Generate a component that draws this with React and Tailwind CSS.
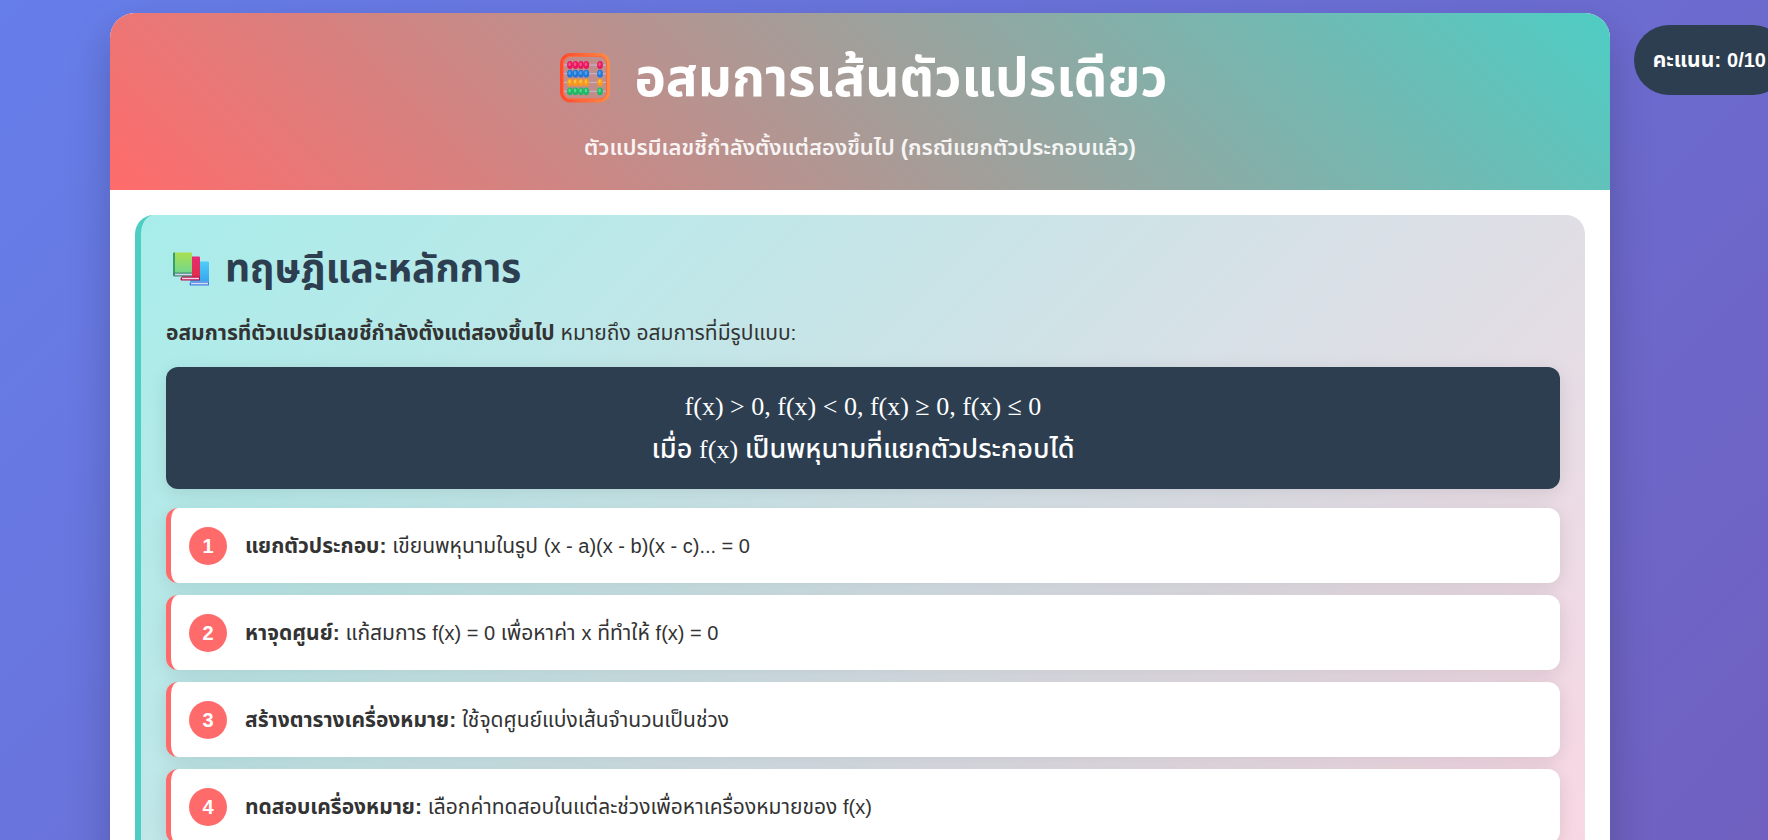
const STEPS = [
  {
    title: "แยกตัวประกอบ:",
    text: (
      <>
        เขียนพหุนามในรูป <Math>(x - a)(x - b)(x - c)... = 0</Math>
      </>
    ),
  },
  {
    title: "หาจุดศูนย์:",
    text: (
      <>
        แก้สมการ <Math>f(x) = 0</Math> เพื่อหาค่า <Math>x</Math> ที่ทำให้ <Math>f(x) = 0</Math>
      </>
    ),
  },
  {
    title: "สร้างตารางเครื่องหมาย:",
    text: "ใช้จุดศูนย์แบ่งเส้นจำนวนเป็นช่วง",
  },
  {
    title: "ทดสอบเครื่องหมาย:",
    text: (
      <>
        เลือกค่าทดสอบในแต่ละช่วงเพื่อหาเครื่องหมายของ <Math>f(x)</Math>
      </>
    ),
  },
];

const BEAD_ROWS = [
  { y: 12, color: "#e8175d", light: "#ff4f8b" },
  { y: 20.7, color: "#1f78d8", light: "#4fa3f2" },
  { y: 29.4, color: "#f79a1c", light: "#ffc04a" },
  { y: 38.3, color: "#1fb866", light: "#52dd8e" },
];

// Latin glyphs run larger than the Thai ones, so formulas sit one size down
function Math({ children }) {
  return <span className="text-[20px]">{children}</span>;
}

function AbacusIcon() {
  return (
    <svg className="size-[50px] shrink-0" viewBox="0 0 50 50" aria-hidden="true">
      <defs>
        <linearGradient id="frame" x1="0" y1="0" x2="1" y2="0">
          <stop offset="0" stopColor="#ff4a2e" />
          <stop offset="1" stopColor="#ff8a45" />
        </linearGradient>
        <linearGradient id="frameInner" x1="0" y1="0" x2="1" y2="0">
          <stop offset="0" stopColor="#ff7048" />
          <stop offset="1" stopColor="#f9653c" />
        </linearGradient>
      </defs>
      <rect x="2" y="2" width="46" height="45.5" rx="8" fill="none" stroke="url(#frame)" strokeWidth="4" />
      <rect x="3.4" y="3.4" width="43.2" height="42.7" rx="7" fill="none" stroke="url(#frameInner)" strokeWidth="1" />
      {BEAD_ROWS.map((row) => (
        <g key={row.y}>
          <path d={`M4 ${row.y}H46`} stroke="#c9b7dc" strokeWidth="1" />
          {[10, 15.5, 21, 26.3, 40].map((x) => (
            <g key={x}>
              <ellipse cx={x} cy={row.y} rx="2.9" ry="3.9" fill={row.color} />
              <ellipse cx={x - 0.4} cy={row.y - 0.8} rx="1.2" ry="2" fill={row.light} />
            </g>
          ))}
        </g>
      ))}
    </svg>
  );
}

function BooksIcon() {
  return (
    <svg className="h-[34px] w-9 shrink-0" viewBox="0 0 36 34" aria-hidden="true">
      <defs>
        <linearGradient id="bookGreen" x1="0" y1="0" x2="0" y2="1">
          <stop offset="0" stopColor="#a9e04f" />
          <stop offset="1" stopColor="#72d68d" />
        </linearGradient>
        <linearGradient id="bookBlue" x1="0" y1="0" x2="0" y2="1">
          <stop offset="0" stopColor="#4fcdf8" />
          <stop offset="1" stopColor="#38a5ee" />
        </linearGradient>
        <linearGradient id="bookRed" x1="0" y1="0" x2="0" y2="1">
          <stop offset="0" stopColor="#e62a73" />
          <stop offset="1" stopColor="#e0304a" />
        </linearGradient>
      </defs>
      <path d="M17 9.500h18a1 1 0 0 1 1 1v19H17z" fill="url(#bookBlue)" />
      <path d="M18 29.500h18v4H18a1.500 1.500 0 0 1-1.500-2z" fill="#3f7fe0" />
      <path d="M18 30.700h17v1.600H18z" fill="#d9dcf8" />
      <path d="M9 4.500h17a1 1 0 0 1 1 1V25H9z" fill="url(#bookRed)" />
      <path d="M9 24.500h18v4H9a1.500 1.500 0 0 1-1.500-2z" fill="#b8124f" />
      <path d="M9 25.700h17v1.600H9z" fill="#f3d3e6" />
      <path d="M1 .5h17a1 1 0 0 1 1 1V21H1z" fill="url(#bookGreen)" />
      <path d="M0 1.500a1 1 0 0 1 1-1h1V22H0z" fill="#35a06a" />
      <path d="M0 20.500h19v4H1.500A1.500 1.500 0 0 1 0 23z" fill="#3c8b76" />
      <path d="M2 21.700h17v1.600H2z" fill="#dcd3ee" />
    </svg>
  );
}

function Step({ number, title, text }) {
  return (
    <li className="flex min-h-[75px] items-center gap-[18px] rounded-xl border-l-[5px] border-[#ff6b6b] bg-white px-[18px] shadow-[0_4px_18px_rgba(0,0,0,0.1)]">
      <span className="flex size-[38px] shrink-0 items-center justify-center rounded-full bg-[#ff6b6b] text-[20px] font-bold text-white">
        {number}
      </span>
      <p>
        <strong>{title}</strong> {text}
      </p>
    </li>
  );
}

export default function App() {
  return (
    <div className="h-screen overflow-hidden bg-[linear-gradient(135deg,#667eea_0px,#764ba2_3146px)] pt-[13px] pr-12 font-['Liberation_Sans','Noto_Sans_Thai',sans-serif] text-[21px] leading-8 text-[#333]">
      <div className="fixed top-[25px] -right-5 rounded-[38px] bg-[#2c3e50] py-[19px] pr-[22px] pl-[19px] font-bold whitespace-nowrap text-white">
        คะแนน: <Math>0/10</Math>
      </div>

      <main className="mx-auto max-w-[1500px] overflow-hidden rounded-[25px] bg-white shadow-[0_19px_44px_rgba(0,0,0,0.2)]">
        {/* Header */}
        <header className="bg-[linear-gradient(45deg,#ff6b6b,#4ecdc4)] px-6 py-[25px] text-center text-white">
          <h1 className="flex items-center justify-center gap-6 pl-2 text-[53px] leading-[80px] font-bold">
            <AbacusIcon />
            อสมการเส้นตัวแปรเดียว
          </h1>
          <p className="mt-3 text-[22px] leading-[35px] font-semibold opacity-90">
            ตัวแปรมีเลขชี้กำลังตั้งแต่สองขึ้นไป (กรณีแยกตัวประกอบแล้ว)
          </p>
        </header>

        {/* Theory */}
        <div className="p-[25px]">
          <section className="rounded-[19px] border-l-[6px] border-[#4ecdc4] bg-[linear-gradient(135deg,#a8edea_0px,#fed6e3_1563px)] p-[25px] pb-28">
            <h2 className="flex items-center gap-4 pl-[7px] text-[39px] leading-[58px] font-bold text-[#2c3e50]">
              <BooksIcon />
              ทฤษฎีและหลักการ
            </h2>
            <p className="mt-[19px]">
              <strong>อสมการที่ตัวแปรมีเลขชี้กำลังตั้งแต่สองขึ้นไป</strong> หมายถึง อสมการที่มีรูปแบบ:
            </p>

            <div className="mt-[18px] rounded-xl bg-[#2c3e50] pt-[19px] pb-[18px] text-center font-['Liberation_Serif','Noto_Sans_Thai',sans-serif] text-[26px] leading-[42px] text-white shadow-[0_4px_18px_rgba(0,0,0,0.1)]">
              <p>f(x) &gt; 0, f(x) &lt; 0, f(x) ≥ 0, f(x) ≤ 0</p>
              <p className="text-[27px] font-medium">
                เมื่อ <span className="text-[26px]">f(x)</span> เป็นพหุนามที่แยกตัวประกอบได้
              </p>
            </div>

            <ol className="mt-[19px] flex flex-col gap-3">
              {STEPS.map((step, i) => (
                <Step key={step.title} number={i + 1} title={step.title} text={step.text} />
              ))}
            </ol>
          </section>
        </div>
      </main>
    </div>
  );
}
